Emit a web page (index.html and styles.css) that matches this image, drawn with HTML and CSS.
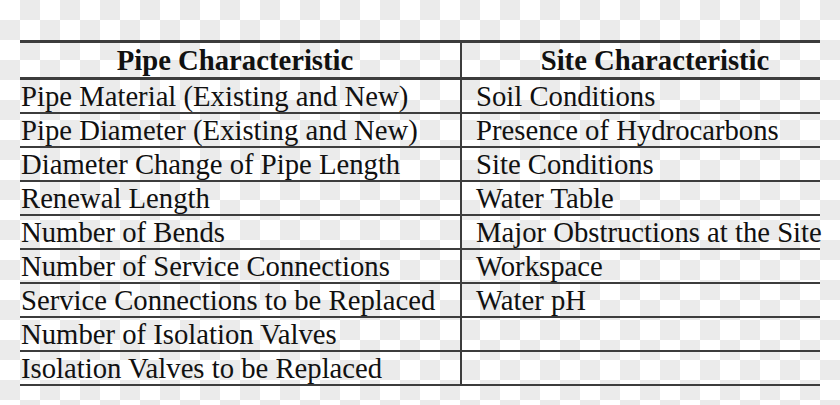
FILE: index.html
```html
<!DOCTYPE html>
<html>
<head>
<meta charset="utf-8">
<link rel="stylesheet" href="styles.css">
</head>
<body>
<div class="page">
  <table class="char-table">
    <colgroup>
      <col class="col-pipe">
      <col class="col-site">
    </colgroup>
    <thead>
      <tr>
        <th class="head pipe-head">Pipe Characteristic</th>
        <th class="head site-head">Site Characteristic</th>
      </tr>
    </thead>
    <tbody>
      <tr><td class="pipe">Pipe Material (Existing and New)</td><td class="site">Soil Conditions</td></tr>
      <tr><td class="pipe">Pipe Diameter (Existing and New)</td><td class="site">Presence of Hydrocarbons</td></tr>
      <tr><td class="pipe">Diameter Change of Pipe Length</td><td class="site">Site Conditions</td></tr>
      <tr><td class="pipe">Renewal Length</td><td class="site">Water Table</td></tr>
      <tr><td class="pipe">Number of Bends</td><td class="site">Major Obstructions at the Site</td></tr>
      <tr><td class="pipe">Number of Service Connections</td><td class="site">Workspace</td></tr>
      <tr><td class="pipe">Service Connections to be Replaced</td><td class="site">Water pH</td></tr>
      <tr><td class="pipe">Number of Isolation Valves</td><td class="site"></td></tr>
      <tr class="last"><td class="pipe">Isolation Valves to be Replaced</td><td class="site"></td></tr>
    </tbody>
  </table>
</div>
</body>
</html>
```

FILE: styles.css
```css
html, body {
  margin: 0;
  padding: 0;
}

body {
  width: 840px;
  height: 405px;
  overflow: hidden;
  background: repeating-conic-gradient(#ebebeb 0 25%, #ffffff 0 50%) 0 0 / 40px 40px;
  font-family: "Liberation Serif", "Times New Roman", serif;
  color: #111;
}

.page {
  padding: 40px 20px 0 20px;
}

.char-table {
  width: 800px;
  border-collapse: separate;
  border-spacing: 0;
  table-layout: fixed;
  font-size: 28.7px;
}

.col-pipe { width: 442px; }
.col-site { width: 358px; }

.char-table th,
.char-table td {
  padding: 0;
  white-space: nowrap;
  overflow: visible;
  vertical-align: top;
}

.head {
  font-weight: bold;
  text-align: center;
  line-height: 34px;
  height: 34px;
  border-top: 3px solid #3c3c3c;
  border-bottom: 3px solid #3c3c3c;
}

.pipe-head {
  padding-right: 10px !important;
  border-right: 2px solid #3c3c3c;
}

.site-head {
  padding-left: 28px !important;
}

.char-table td {
  line-height: 32px;
  height: 32px;
  text-align: left;
  border-bottom: 2px solid #3c3c3c;
}

.char-table td.pipe {
  padding-left: 1px;
  border-right: 2px solid #3c3c3c;
}

.char-table td.site {
  padding-left: 14px;
}
```
